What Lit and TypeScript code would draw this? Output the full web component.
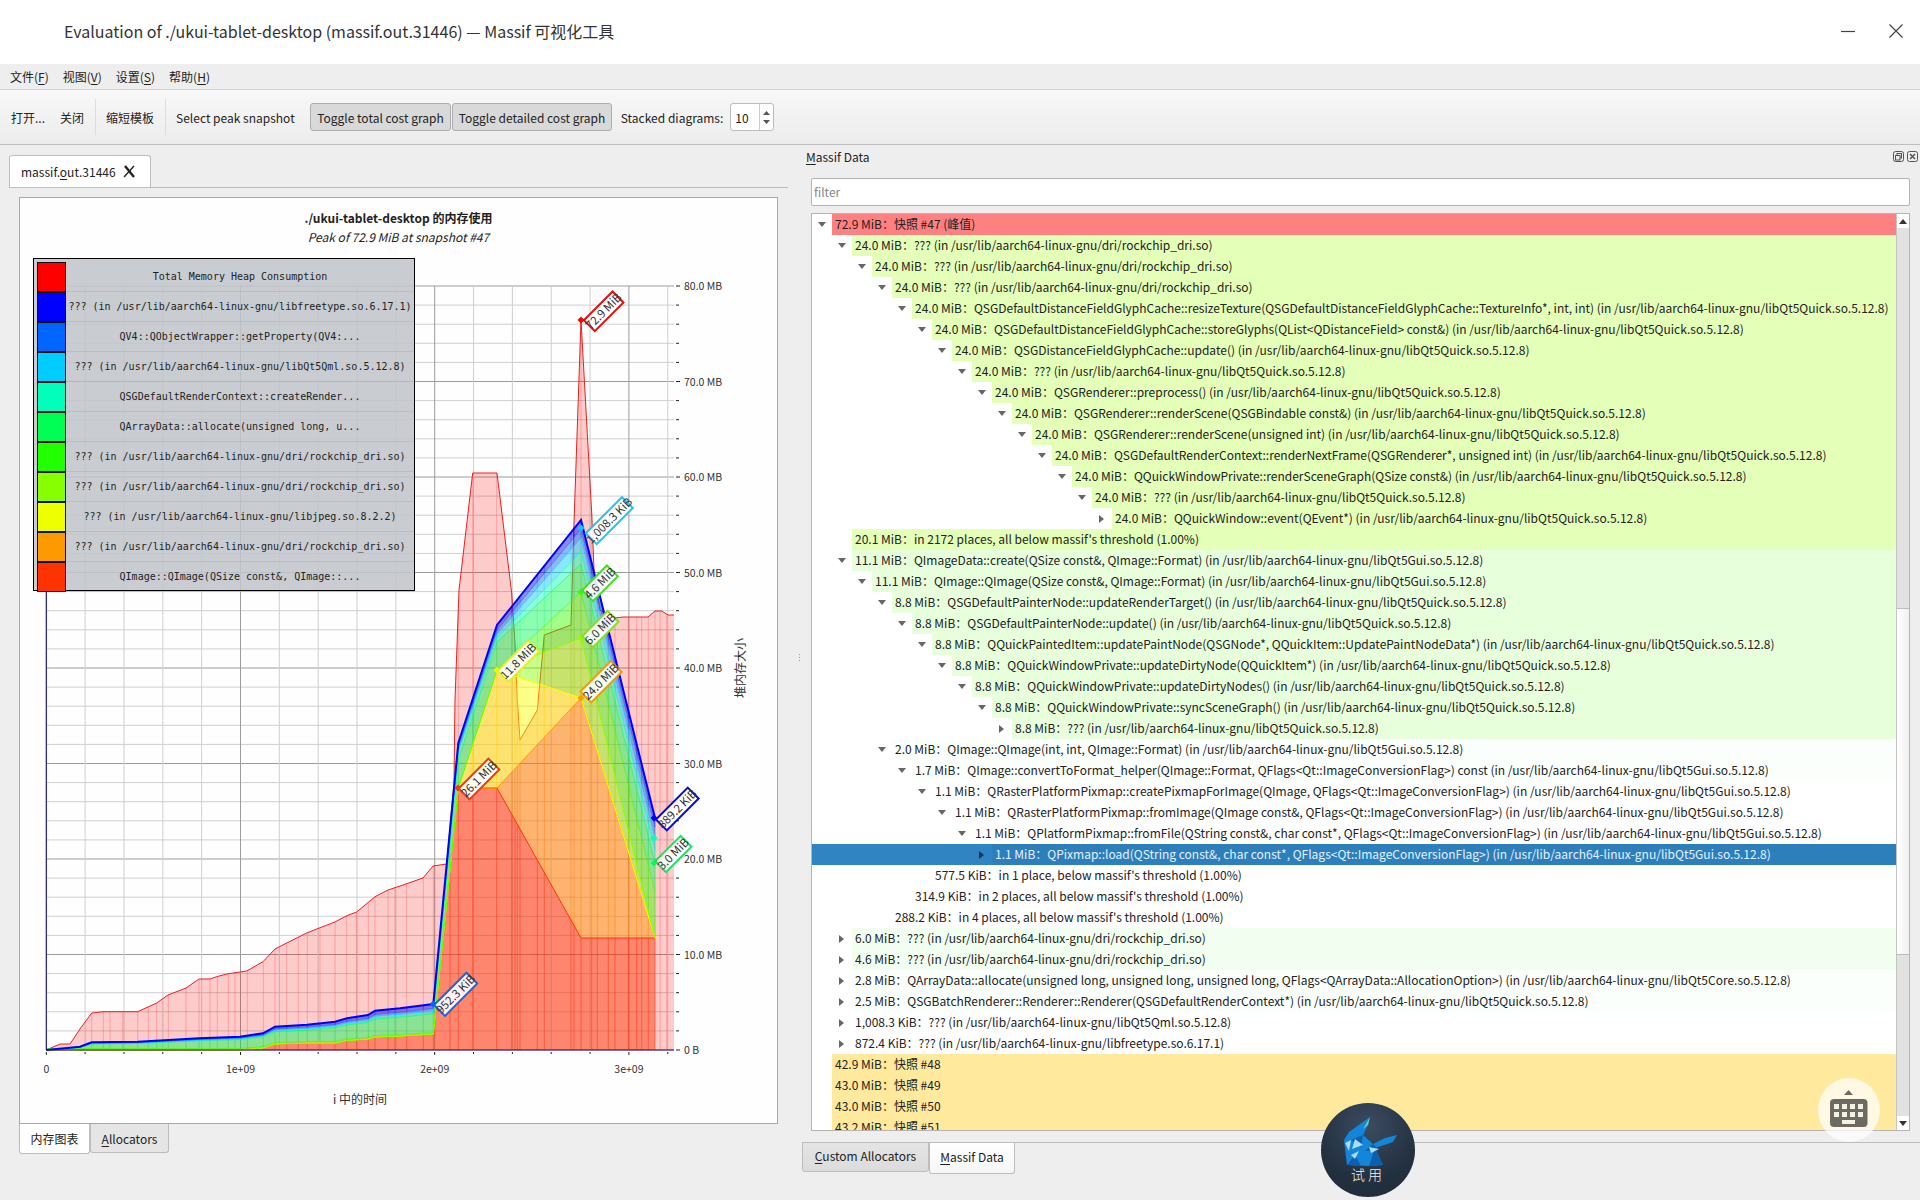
import { LitElement, html, css, svg } from 'lit';
import { customElement } from 'lit/decorators.js';

const QUICK = '(in /usr/lib/aarch64-linux-gnu/libQt5Quick.so.5.12.8)';
const GUI = '(in /usr/lib/aarch64-linux-gnu/libQt5Gui.so.5.12.8)';
const DRI = '(in /usr/lib/aarch64-linux-gnu/dri/rockchip_dri.so)';

type Tone = 'peak' | 'lime' | 'mint' | 'faint' | 'soft' | 'none' | 'snap' | 'sel';
interface Row { d: number; a: '' | 'v' | '>'; t: string; c: Tone; }

const ROWS: Row[] = [
  { d: 0, a: 'v', t: '72.9 MiB：快照 #47 (峰值)', c: 'peak' },
  { d: 1, a: 'v', t: `24.0 MiB：??? ${DRI}`, c: 'lime' },
  { d: 2, a: 'v', t: `24.0 MiB：??? ${DRI}`, c: 'lime' },
  { d: 3, a: 'v', t: `24.0 MiB：??? ${DRI}`, c: 'lime' },
  { d: 4, a: 'v', t: `24.0 MiB：QSGDefaultDistanceFieldGlyphCache::resizeTexture(QSGDefaultDistanceFieldGlyphCache::TextureInfo*, int, int) ${QUICK}`, c: 'lime' },
  { d: 5, a: 'v', t: `24.0 MiB：QSGDefaultDistanceFieldGlyphCache::storeGlyphs(QList<QDistanceField> const&) ${QUICK}`, c: 'lime' },
  { d: 6, a: 'v', t: `24.0 MiB：QSGDistanceFieldGlyphCache::update() ${QUICK}`, c: 'lime' },
  { d: 7, a: 'v', t: `24.0 MiB：??? ${QUICK}`, c: 'lime' },
  { d: 8, a: 'v', t: `24.0 MiB：QSGRenderer::preprocess() ${QUICK}`, c: 'lime' },
  { d: 9, a: 'v', t: `24.0 MiB：QSGRenderer::renderScene(QSGBindable const&) ${QUICK}`, c: 'lime' },
  { d: 10, a: 'v', t: `24.0 MiB：QSGRenderer::renderScene(unsigned int) ${QUICK}`, c: 'lime' },
  { d: 11, a: 'v', t: `24.0 MiB：QSGDefaultRenderContext::renderNextFrame(QSGRenderer*, unsigned int) ${QUICK}`, c: 'lime' },
  { d: 12, a: 'v', t: `24.0 MiB：QQuickWindowPrivate::renderSceneGraph(QSize const&) ${QUICK}`, c: 'lime' },
  { d: 13, a: 'v', t: `24.0 MiB：??? ${QUICK}`, c: 'lime' },
  { d: 14, a: '>', t: `24.0 MiB：QQuickWindow::event(QEvent*) ${QUICK}`, c: 'lime' },
  { d: 1, a: '', t: "20.1 MiB：in 2172 places, all below massif's threshold (1.00%)", c: 'lime' },
  { d: 1, a: 'v', t: `11.1 MiB：QImageData::create(QSize const&, QImage::Format) ${GUI}`, c: 'mint' },
  { d: 2, a: 'v', t: `11.1 MiB：QImage::QImage(QSize const&, QImage::Format) ${GUI}`, c: 'mint' },
  { d: 3, a: 'v', t: `8.8 MiB：QSGDefaultPainterNode::updateRenderTarget() ${QUICK}`, c: 'mint' },
  { d: 4, a: 'v', t: `8.8 MiB：QSGDefaultPainterNode::update() ${QUICK}`, c: 'mint' },
  { d: 5, a: 'v', t: `8.8 MiB：QQuickPaintedItem::updatePaintNode(QSGNode*, QQuickItem::UpdatePaintNodeData*) ${QUICK}`, c: 'mint' },
  { d: 6, a: 'v', t: `8.8 MiB：QQuickWindowPrivate::updateDirtyNode(QQuickItem*) ${QUICK}`, c: 'mint' },
  { d: 7, a: 'v', t: `8.8 MiB：QQuickWindowPrivate::updateDirtyNodes() ${QUICK}`, c: 'mint' },
  { d: 8, a: 'v', t: `8.8 MiB：QQuickWindowPrivate::syncSceneGraph() ${QUICK}`, c: 'mint' },
  { d: 9, a: '>', t: `8.8 MiB：??? ${QUICK}`, c: 'mint' },
  { d: 3, a: 'v', t: `2.0 MiB：QImage::QImage(int, int, QImage::Format) ${GUI}`, c: 'faint' },
  { d: 4, a: 'v', t: `1.7 MiB：QImage::convertToFormat_helper(QImage::Format, QFlags<Qt::ImageConversionFlag>) const ${GUI}`, c: 'faint' },
  { d: 5, a: 'v', t: `1.1 MiB：QRasterPlatformPixmap::createPixmapForImage(QImage, QFlags<Qt::ImageConversionFlag>) ${GUI}`, c: 'none' },
  { d: 6, a: 'v', t: `1.1 MiB：QRasterPlatformPixmap::fromImage(QImage const&, QFlags<Qt::ImageConversionFlag>) ${GUI}`, c: 'none' },
  { d: 7, a: 'v', t: `1.1 MiB：QPlatformPixmap::fromFile(QString const&, char const*, QFlags<Qt::ImageConversionFlag>) ${GUI}`, c: 'none' },
  { d: 8, a: '>', t: `1.1 MiB：QPixmap::load(QString const&, char const*, QFlags<Qt::ImageConversionFlag>) ${GUI}`, c: 'sel' },
  { d: 5, a: '', t: "577.5 KiB：in 1 place, below massif's threshold (1.00%)", c: 'none' },
  { d: 4, a: '', t: "314.9 KiB：in 2 places, all below massif's threshold (1.00%)", c: 'none' },
  { d: 3, a: '', t: "288.2 KiB：in 4 places, all below massif's threshold (1.00%)", c: 'none' },
  { d: 1, a: '>', t: `6.0 MiB：??? ${DRI}`, c: 'soft' },
  { d: 1, a: '>', t: `4.6 MiB：??? ${DRI}`, c: 'soft' },
  { d: 1, a: '>', t: '2.8 MiB：QArrayData::allocate(unsigned long, unsigned long, unsigned long, QFlags<QArrayData::AllocationOption>) (in /usr/lib/aarch64-linux-gnu/libQt5Core.so.5.12.8)', c: 'faint' },
  { d: 1, a: '>', t: `2.5 MiB：QSGBatchRenderer::Renderer::Renderer(QSGDefaultRenderContext*) ${QUICK}`, c: 'faint' },
  { d: 1, a: '>', t: '1,008.3 KiB：??? (in /usr/lib/aarch64-linux-gnu/libQt5Qml.so.5.12.8)', c: 'none' },
  { d: 1, a: '>', t: '872.4 KiB：??? (in /usr/lib/aarch64-linux-gnu/libfreetype.so.6.17.1)', c: 'none' },
  { d: 0, a: '', t: '42.9 MiB：快照 #48', c: 'snap' },
  { d: 0, a: '', t: '43.0 MiB：快照 #49', c: 'snap' },
  { d: 0, a: '', t: '43.0 MiB：快照 #50', c: 'snap' },
  { d: 0, a: '', t: '43.2 MiB：快照 #51', c: 'snap' },
];

const LEGEND: [string, string][] = [
  ['#ff0000', 'Total Memory Heap Consumption'],
  ['#0000ff', '??? (in /usr/lib/aarch64-linux-gnu/libfreetype.so.6.17.1)'],
  ['#0066ff', 'QV4::QObjectWrapper::getProperty(QV4:...'],
  ['#00ccff', '??? (in /usr/lib/aarch64-linux-gnu/libQt5Qml.so.5.12.8)'],
  ['#00ffbb', 'QSGDefaultRenderContext::createRender...'],
  ['#00ff55', 'QArrayData::allocate(unsigned long, u...'],
  ['#22ff00', '??? (in /usr/lib/aarch64-linux-gnu/dri/rockchip_dri.so)'],
  ['#88ff00', '??? (in /usr/lib/aarch64-linux-gnu/dri/rockchip_dri.so)'],
  ['#eeff00', '??? (in /usr/lib/aarch64-linux-gnu/libjpeg.so.8.2.2)'],
  ['#ff9900', '??? (in /usr/lib/aarch64-linux-gnu/dri/rockchip_dri.so)'],
  ['#ff3300', 'QImage::QImage(QSize const&, QImage::...'],
];

// chart data is kept in page pixels, the svg viewBox maps it 1:1
const X0 = 46.3, X_STEP = 38.84, X_END = 674;
const Y0 = 1050, Y_STEP = 19.1, Y_TOP = 286;

const TOTAL: number[][] = [
  [46.3, 1050], [60, 1044], [70, 1044], [80, 1029], [91.7, 1013], [103, 1011.7], [137.7, 1011.7], [156.7, 1003],
  [168, 995], [186, 988], [199, 979], [210, 979], [216.7, 976.7], [226.7, 974], [246.7, 971], [263, 961.7],
  [275, 949], [286.7, 943], [306.7, 933], [316.7, 929], [335, 922], [346.7, 915.7], [356.7, 912], [375, 896.7],
  [388, 890], [400, 886], [423, 878], [433, 866], [446.7, 864], [454, 783], [455, 700], [459, 590], [472.7, 473],
  [497, 473], [511.7, 593], [515, 643], [517.3, 700], [520, 740], [537.3, 710], [544.3, 635], [571, 625], [574, 523],
  [581, 320], [591.7, 513], [594.3, 577], [600, 610], [615, 618], [623, 617], [648, 617], [655, 611], [661.7, 611],
  [668, 615], [674, 615],
];

const SNAPS = [91.7, 103.3, 110, 122.7, 137.7, 148.3, 156.7, 168.3, 186, 199, 210, 217.3, 228.3, 235, 247.3, 263.3,
  275, 286.7, 298.3, 307.3, 320, 335, 346.7, 356.7, 368.3, 375, 388, 395, 406.7, 423.3, 433.3, 450, 458.3, 472.7,
  496.7, 511.7, 515, 517.3, 520, 537.3, 544.3, 571, 574, 581, 591.7, 597.3, 608.3, 615, 628.3, 636.7, 641.7, 648.3,
  655, 660, 666.7];

const XS = [46.3, 80, 91.7, 137.7, 199, 240, 263, 275, 307, 335, 347, 368, 375, 400, 433.3, 458.3, 497, 581, 655];
const BASE = [1050, 1050, 1050, 1050, 1050, 1050, 1048, 1044, 1043, 1043, 1040.5, 1039, 1037, 1036, 1034];
const TOP = [1050, 1046.7, 1042.3, 1041.7, 1038.3, 1036.7, 1033.3, 1026.7, 1024.7, 1021.7, 1018.3, 1015, 1010.7, 1008.3, 1004];
const under = (k: number) => TOP.map(y => y + k * (Y0 - y) / 42);

const LAYERS: { color: string; tops: number[] }[] = [
  { color: '#ff3300', tops: [...BASE, 788, 788, 938, 938] },
  { color: '#ff9900', tops: [...BASE, 788, 788, 698, 938] },
  { color: '#ffff00', tops: [...BASE, 788, 670, 698, 938] },
  { color: '#88ff00', tops: [...BASE, 788, 670, 638, 938] },
  { color: '#33ff00', tops: [...BASE.map(y => y - 1.5), 788, 670, 592, 892] },
  { color: '#00ff55', tops: [...under(9), 760, 642, 564, 863] },
  { color: '#00ffbb', tops: [...under(8), 752, 638, 552, 850] },
  { color: '#00ccff', tops: [...under(6), 750, 634, 538, 838] },
  { color: '#0066ff', tops: [...under(4), 747, 630, 529, 827] },
  { color: '#0000ff', tops: [...TOP, 743, 625, 520, 818] },
];

const LABELS = [
  { t: '72.9 MiB', x: 603.7, y: 311.3, w: 42.5, c: '#e01010' },
  { t: '1,008.3 KiB', x: 609.3, y: 520.7, w: 53, c: '#22c4ee' },
  { t: '4.6 MiB', x: 600, y: 583.3, w: 37, c: '#44dd22' },
  { t: '6.0 MiB', x: 600.3, y: 629, w: 38, c: '#88dd22' },
  { t: '11.8 MiB', x: 518.3, y: 661.3, w: 45, c: '#e6ee22' },
  { t: '24.0 MiB', x: 601, y: 681.7, w: 45, c: '#f09a10' },
  { t: '26.1 MiB', x: 479, y: 779, w: 44, c: '#ee3a10' },
  { t: '952.3 KiB', x: 455.7, y: 994.3, w: 47.6, c: '#1a66e0' },
  { t: '889.2 KiB', x: 677.3, y: 809, w: 47, c: '#0808d8' },
  { t: '3.0 MiB', x: 673.3, y: 854, w: 38, c: '#22dd66' },
];

const MARKS: [number, number, string][] = [
  [581, 320, '#ff0000'], [581, 528, '#00ccff'], [581, 592, '#33ff00'], [581, 638, '#88ff00'], [497, 670, '#eeff00'],
  [581, 698, '#ff9900'], [458, 788, '#ff3300'], [433.3, 1004, '#0066ff'], [654, 818, '#0000ff'], [654, 838, '#00ffbb'],
  [654, 863, '#00ff55'],
];

const pts = (p: number[][]) => p.map(q => `${q[0]},${q[1]}`).join(' ');

function at(xs: number[], ys: number[], x: number) {
  for (let i = 1; i < xs.length; i++) {
    if (x <= xs[i]) return ys[i - 1] + (ys[i] - ys[i - 1]) * (x - xs[i - 1]) / (xs[i] - xs[i - 1]);
  }
  return ys[ys.length - 1];
}

function chart() {
  const vGrid: number[] = [];
  for (let i = 0; X0 + i * X_STEP <= X_END; i++) vGrid.push(i);
  const hGrid: number[] = [];
  for (let i = 0; i <= 40; i++) hGrid.push(i);
  const totalX = TOTAL.map(p => p[0]);
  const totalY = TOTAL.map(p => p[1]);
  return html`<svg class="plot" viewBox="20 198 758 925" width="758" height="925">
    ${hGrid.map(i => {
      const y = Y0 - i * Y_STEP;
      return svg`<line x1=${X0} x2=${X_END} y1=${y} y2=${y} class=${i % 5 ? 'minor' : 'major'}></line>
        <line x1="676" x2=${i % 5 ? 679 : 680} y1=${y} y2=${y} class="tick"></line>`;
    })}
    ${vGrid.map(i => {
      const x = X0 + i * X_STEP;
      return svg`<line x1=${x} x2=${x} y1=${Y_TOP} y2=${Y0} class=${i % 5 ? 'minor' : 'major'}></line>
        <line x1=${x} x2=${x} y1="1052" y2=${i % 5 ? 1054 : 1055} class="tick"></line>`;
    })}
    <polygon points=${pts([...TOTAL, [X_END, Y0], [X0, Y0]])} fill="rgba(255,0,0,.2)"></polygon>
    ${SNAPS.map(x => svg`<line x1=${x} x2=${x} y1=${at(totalX, totalY, x)} y2=${Y0} stroke="rgba(255,0,0,.22)"></line>`)}
    <polyline points=${pts(TOTAL)} fill="none" stroke="#e82020"></polyline>
    ${LAYERS.map((l, n) => {
      const low = n ? LAYERS[n - 1].tops : XS.map(() => Y0);
      const top = l.tops.map((y, i) => [XS[i], y]);
      const bottom = low.map((y, i) => [XS[i], y]).reverse();
      return svg`<polygon points=${pts([...top, ...bottom])} fill=${l.color} fill-opacity=".45"></polygon>
        ${SNAPS.filter(x => x <= 655).map(x => svg`<line x1=${x} x2=${x} y1=${at(XS, l.tops, x)} y2=${at(XS, low, x)} stroke=${l.color} stroke-opacity=".3"></line>`)}`;
    })}
    ${LAYERS.map((l, n) => svg`<polyline points=${pts(l.tops.map((y, i) => [XS[i], y]))} fill="none" stroke=${l.color} stroke-width=${n === 9 ? 2 : 1} stroke-opacity=${n > 3 && n < 9 ? 0.6 : 1}></polyline>`)}
    <line x1=${X0} x2=${X0} y1=${Y_TOP} y2=${Y0} stroke="#0a0a8c"></line>
    <line x1=${X0} x2=${X_END} y1=${Y0} y2=${Y0} stroke="#30106a"></line>
    ${MARKS.map(m => svg`<rect x=${m[0] - 2.5} y=${m[1] - 2.5} width="5" height="5" fill=${m[2]} transform="rotate(45 ${m[0]} ${m[1]})"></rect>`)}
    ${LABELS.map(l => svg`<g transform="rotate(-45 ${l.x} ${l.y})">
      <rect x=${l.x - l.w / 2 + 1} y=${l.y - 7.7} width=${l.w - 2} height="15.4" fill="rgba(255,255,255,.9)" stroke=${l.c} stroke-width="2"></rect>
      <text x=${l.x} y=${l.y + 4} text-anchor="middle" class="mark">${l.t}</text>
    </g>`)}
    ${['0', '10.0', '20.0', '30.0', '40.0', '50.0', '60.0', '70.0', '80.0'].map((t, i) =>
      svg`<text x="684" y=${Y0 - i * 95.5 + 4} class="axis">${i ? `${t} MB` : '0 B'}</text>`)}
    ${['0', '1e+09', '2e+09', '3e+09'].map((t, i) =>
      svg`<text x=${X0 + i * 194.2} y="1073" text-anchor="middle" class="axis">${t}</text>`)}
    <text x="360" y="1104" text-anchor="middle" class="axis-title">i 中的时间</text>
    <text transform="translate(745 668) rotate(-90)" text-anchor="middle" class="axis-title">堆内存大小</text>
  </svg>`;
}

@customElement('app-root')
export class AppRoot extends LitElement {
  static styles = css`
    :host {
      display: block;
      width: 1920px;
      height: 1200px;
      position: relative;
      overflow: hidden;
      background: #eeeeee;
      color: #222;
      font-family: "Noto Sans CJK SC", "Noto Sans", sans-serif;
      font-size: 12px;
    }
    u { text-underline-offset: 2px; }

    .titlebar {
      height: 64px;
      box-sizing: border-box;
      background: #fff;
      display: flex;
      align-items: center;
      padding: 0 0 2px 64px;
      font-size: 16px;
      color: #333;
    }
    .winctl {
      margin-left: auto;
      display: flex;
      align-items: center;
      gap: 34px;
      padding-right: 17px;
    }

    .menubar {
      height: 25px;
      border-bottom: 1px solid #d4d4d4;
      display: flex;
      align-items: center;
      padding-left: 10px;
      gap: 14px;
    }

    .toolbar {
      height: 54px;
      background: linear-gradient(#f8f8f8, #ececec);
      border-bottom: 1px solid #bdbdbd;
      display: flex;
      align-items: center;
      padding-left: 11px;
    }
    .tool { margin-right: 15px; }
    .sep {
      width: 1px;
      height: 36px;
      background: #dcdcdc;
      margin: 0 10px 0 -4px;
    }
    .toggle {
      height: 28px;
      box-sizing: border-box;
      padding: 0 6.5px;
      display: flex;
      align-items: center;
      background: #d9d9d9;
      border: 1px solid #aeaeae;
      border-radius: 3px;
      margin-right: 1px;
    }
    .toggle + .toggle { padding: 0 5.5px; }
    .stacked { margin-left: 8px; }
    .spin {
      width: 44px;
      height: 28px;
      box-sizing: border-box;
      background: #fff;
      border: 1px solid #bbb;
      border-radius: 3px;
      display: flex;
      align-items: center;
      justify-content: space-between;
      padding-left: 4px;
      margin-left: -8px;
    }
    .spin-btns {
      width: 13px;
      height: 100%;
      border-left: 1px solid #ccc;
      display: flex;
      flex-direction: column;
      align-items: center;
      justify-content: center;
      gap: 5px;
    }

    .main {
      display: flex;
      height: 1055px;
    }
    .left {
      width: 788px;
      flex: none;
      padding: 10px 0 0 9px;
      box-sizing: border-box;
    }
    .tabline {
      height: 32px;
      border-bottom: 1px solid #bdbdbd;
      display: flex;
    }
    .top-tab {
      width: 142px;
      height: 32px;
      box-sizing: border-box;
      background: #fff;
      border: 1px solid #bdbdbd;
      border-bottom: none;
      border-radius: 3px 3px 0 0;
      display: flex;
      align-items: center;
      padding-left: 11px;
      gap: 7px;
    }
    .frame {
      position: relative;
      margin: 9px 0 0 10px;
      width: 759px;
      height: 927px;
      box-sizing: border-box;
      background: #fefefe;
      border: 1px solid #a8a8a8;
    }
    .plot { display: block; }
    .plot .minor { stroke: #cfcfcf; }
    .plot .major { stroke: #9c9c9c; }
    .plot .tick { stroke: #222; }
    .plot .axis { font-size: 10.5px; fill: #333; }
    .plot .axis-title { font-size: 12px; fill: #333; }
    .plot .mark { font-size: 11.5px; fill: #333; }
    .chart-head {
      position: absolute;
      top: 10px;
      left: 0;
      right: 0;
      text-align: center;
      line-height: 19px;
    }
    .chart-head b { display: block; font-weight: 700; }
    .chart-head i { display: block; font-style: italic; }

    .legend {
      position: absolute;
      left: 13px;
      top: 60px;
      width: 382px;
      height: 333px;
      box-sizing: border-box;
      border: 1px solid #000;
      padding: 3px 0 0 3px;
      background: rgba(193, 198, 202, .87);
      font-family: "DejaVu Sans Mono", "Liberation Mono", monospace;
      font-size: 10px;
      color: #222;
    }
    .legend-row {
      height: 30px;
      display: flex;
      align-items: center;
      border-bottom: 1px solid rgba(170, 175, 180, .5);
      box-sizing: border-box;
    }
    .swatch {
      width: 29px;
      height: 30px;
      flex: none;
      box-sizing: border-box;
      border: 1px solid #111;
    }
    .legend-row span {
      flex: 1;
      text-align: center;
      white-space: nowrap;
    }

    .bottom-tabs { display: flex; margin-left: 10px; }
    .btab {
      height: 29px;
      box-sizing: border-box;
      display: flex;
      align-items: center;
      justify-content: center;
      border: 1px solid #bdbdbd;
      border-top: none;
      border-radius: 0 0 3px 3px;
    }
    .btab.on { background: #fff; width: 71px; height: 30px; }
    .btab.off { background: #e5e5e5; width: 79px; }

    .splitter {
      width: 23px;
      flex: none;
      display: flex;
      flex-direction: column;
      align-items: center;
      justify-content: center;
      gap: 2px;
      padding-bottom: 30px;
      box-sizing: border-box;
    }
    .splitter i {
      width: 1px;
      height: 1px;
      background: #999;
    }

    .right {
      flex: 1;
      display: flex;
      flex-direction: column;
      min-width: 0;
      margin-left: -5px;
    }
    .dock-title {
      height: 33px;
      box-sizing: border-box;
      padding: 0 2px 10px 0;
      display: flex;
      align-items: center;
      justify-content: space-between;
    }
    .dock-btns { display: flex; gap: 3px; }
    .filter {
      margin-left: 5px;
      width: 1099px;
      height: 28px;
      box-sizing: border-box;
      background: #fff;
      border: 1px solid #b4b4b4;
      border-radius: 2px;
      display: flex;
      align-items: center;
      padding: 0 0 1px 2px;
      color: #888;
    }
    .tree {
      margin: 7px 0 0 5px;
      width: 1099px;
      height: 918px;
      box-sizing: border-box;
      background: #fff;
      border: 1px solid #b4b4b4;
      display: flex;
      overflow: hidden;
    }
    .rows { flex: 1; min-width: 0; overflow: hidden; }
    .row { height: 21px; display: flex; align-items: stretch; }
    .row.sel { background: #2f85c2; color: #e4f1ff; }
    .gutter {
      flex: none;
      display: flex;
      align-items: center;
      justify-content: flex-end;
      padding-right: 6px;
      box-sizing: border-box;
    }
    .cell {
      flex: 1;
      min-width: 0;
      padding: 0 0 2px 3px;
      box-sizing: border-box;
      display: flex;
      align-items: center;
      white-space: pre;
    }
    .peak { background: #ff8080; }
    .lime { background: #e3ffb8; }
    .mint { background: #e8ffdc; }
    .soft { background: #f2fff0; }
    .faint { background: #fafffc; }
    .snap { background: #ffe99c; }
    .sel .cell { background: #2c7fba; }

    .scroll {
      width: 13px;
      flex: none;
      box-sizing: border-box;
      border-left: 1px solid #c4c4c4;
      background: #e2e2e2;
      position: relative;
    }
    .sb-btn {
      position: absolute;
      left: 0;
      right: 0;
      height: 14px;
      background: #fff;
      display: flex;
      align-items: center;
      justify-content: center;
    }
    .sb-btn.up { top: 0; }
    .sb-btn.down { bottom: 0; }
    .thumb {
      position: absolute;
      left: 0;
      right: 0;
      top: 394px;
      height: 347px;
      background: linear-gradient(90deg, #fff, #f1f1f1);
      border-top: 1px solid #bbb;
      border-bottom: 1px solid #bbb;
      box-sizing: border-box;
    }
    .dock-tabs {
      margin: 11px 0 0 -4px;
      border-top: 1px solid #bdbdbd;
      display: flex;
      height: 30px;
    }
    .dtab {
      box-sizing: border-box;
      margin-top: -1px;
      padding-bottom: 3px;
      display: flex;
      align-items: center;
      justify-content: center;
      border: 1px solid #bdbdbd;
      border-radius: 0 0 3px 3px;
    }
    .dtab.off { width: 127px; height: 30px; background: linear-gradient(#e4e4e4, #dcdcdc); }
    .dtab.on { width: 86px; height: 31px; background: linear-gradient(#fff, #f6f6f6); border-top: none; margin-top: 0; }

    .badge {
      position: absolute;
      left: 1321px;
      top: 1103px;
      width: 94px;
      height: 94px;
      border-radius: 50%;
      background: radial-gradient(circle at 50% 25%, #3c4c60, #22303f 62%, #1e2b3b);
      color: #f2f4f6;
      font-size: 14px;
    }
    .badge svg { position: absolute; left: 0; top: 0; }
    .badge span {
      position: absolute;
      left: 0;
      right: 0;
      top: 61px;
      text-align: center;
      letter-spacing: 3px;
      font-weight: 300;
    }
    .kbd {
      position: absolute;
      left: 1818px;
      top: 1078px;
      width: 62px;
      height: 64px;
      border-radius: 50%;
      background: rgba(255, 255, 255, .72);
    }
    .kbd svg { position: absolute; left: 0; top: 0; }
  `;

  private arrow(a: string, color = '#666') {
    if (a === 'v') return html`<svg width="8" height="5"><path d="M0 0h8L4 5z" fill=${color}></path></svg>`;
    if (a === '>') return html`<svg width="8" height="8"><path d="M1 0l5 4-5 4z" fill=${color}></path></svg>`;
    return '';
  }

  private renderRow(r: Row) {
    return html`<div class="row ${r.c === 'sel' ? 'sel' : ''}">
      <div class="gutter" style="width:${20 + r.d * 20}px">${this.arrow(r.a, r.c === 'sel' ? '#14365a' : '#666')}</div>
      <div class="cell ${r.c}">${r.t}</div>
    </div>`;
  }

  render() {
    return html`
      <header class="titlebar">
        <span>Evaluation of ./ukui-tablet-desktop (massif.out.31446) — Massif 可视化工具</span>
        <div class="winctl">
          <svg width="14" height="14"><path d="M0 7.5h14" stroke="#444" stroke-width="1.2"></path></svg>
          <svg width="14" height="14"><path d="M.5.5l13 13M13.5.5l-13 13" stroke="#444" stroke-width="1.2"></path></svg>
        </div>
      </header>

      <nav class="menubar">
        <span>文件(<u>F</u>)</span><span>视图(<u>V</u>)</span><span>设置(<u>S</u>)</span><span>帮助(<u>H</u>)</span>
      </nav>

      <div class="toolbar">
        <span class="tool">打开...</span>
        <span class="tool">关闭</span>
        <i class="sep"></i>
        <span class="tool">缩短模板</span>
        <i class="sep"></i>
        <span class="tool">Select peak snapshot</span>
        <span class="toggle">Toggle total cost graph</span>
        <span class="toggle">Toggle detailed cost graph</span>
        <span class="tool stacked">Stacked diagrams:</span>
        <div class="spin">
          <span>10</span>
          <div class="spin-btns">
            <svg width="7" height="4"><path d="M0 4h7L3.5 0z" fill="#555"></path></svg>
            <svg width="7" height="4"><path d="M0 0h7L3.5 4z" fill="#555"></path></svg>
          </div>
        </div>
      </div>

      <div class="main">
        <section class="left">
          <div class="tabline">
            <div class="top-tab">
              <span>massif.<u>o</u>ut.31446</span>
              <svg width="14" height="13"><path d="M2 1l9 11" stroke="#222" stroke-width="2.4"></path><path d="M11 1L1 12" stroke="#222" stroke-width="1.4"></path></svg>
            </div>
          </div>
          <div class="frame">
            ${chart()}
            <div class="chart-head">
              <b>./ukui-tablet-desktop 的内存使用</b>
              <i>Peak of 72.9 MiB at snapshot #47</i>
            </div>
            <div class="legend">
              ${LEGEND.map(l => html`<div class="legend-row">
                <div class="swatch" style="background:${l[0]}"></div><span>${l[1]}</span>
              </div>`)}
            </div>
          </div>
          <div class="bottom-tabs">
            <div class="btab on">内存图表</div>
            <div class="btab off"><span><u>A</u>llocators</span></div>
          </div>
        </section>

        <div class="splitter"><i></i><i></i><i></i></div>

        <section class="right">
          <div class="dock-title">
            <span><u>M</u>assif Data</span>
            <div class="dock-btns">
              <svg width="11" height="11" fill="none" stroke="#555"><rect x=".5" y=".5" width="10" height="10" rx="2"></rect><rect x="4" y="2.5" width="4.5" height="4.5"></rect><rect x="2.5" y="4.5" width="4.5" height="4.5" fill="#eee"></rect></svg>
              <svg width="11" height="11" fill="none" stroke="#555"><rect x=".5" y=".5" width="10" height="10" rx="2"></rect><path d="M3 3l5 5M8 3l-5 5" stroke-width="1.5"></path></svg>
            </div>
          </div>
          <div class="filter">filter</div>
          <div class="tree">
            <div class="rows">${ROWS.map(r => this.renderRow(r))}</div>
            <div class="scroll">
              <div class="sb-btn up"><svg width="8" height="5"><path d="M0 5h8L4 0z" fill="#333"></path></svg></div>
              <div class="thumb"></div>
              <div class="sb-btn down"><svg width="8" height="5"><path d="M0 0h8L4 5z" fill="#333"></path></svg></div>
            </div>
          </div>
          <div class="dock-tabs">
            <div class="dtab off"><span><u>C</u>ustom Allocators</span></div>
            <div class="dtab on"><span><u>M</u>assif Data</span></div>
          </div>
        </section>
      </div>

      <div class="badge">
        <svg width="94" height="94" viewBox="0 0 94 94">
          <path d="M49 14L28 29 23 37 26 62 48 63 62 62 54 45 72 39 76 32 64 35 52 41 42 32 47 22z" fill="#1386d8"></path>
          <path d="M42 32L30 37 40 44zM52 41L44 48 58 47zM26 62L34 52 40 63zM54 45L62 62 48 63z" fill="#0b5fae"></path>
          <path d="M34 36L42 42 31 46zM48 44L58 46 50 50zM24 40L30 37 28 48zM30 52L38 48 34 56z" fill="#a8dcf8"></path>
          <path d="M49 14L42 26 47 22z" fill="#5fd2a8"></path>
        </svg>
        <span>试用</span>
      </div>

      <div class="kbd">
        <svg width="62" height="64" viewBox="0 0 62 64" fill="#6d6a62">
          <path d="M26 17h9l-4.500-5z"></path>
          <rect x="12" y="21" width="37.500" height="28" rx="4"></rect>
          <g fill="#f4f1e6">
            ${[0, 1, 2, 3].map(i => svg`<rect x=${16 + i * 8} y="26" width="5" height="5"></rect><rect x=${16 + i * 8} y="34" width="5" height="5"></rect>`)}
            <rect x="24" y="42" width="13" height="4"></rect>
          </g>
        </svg>
      </div>
    `;
  }
}
